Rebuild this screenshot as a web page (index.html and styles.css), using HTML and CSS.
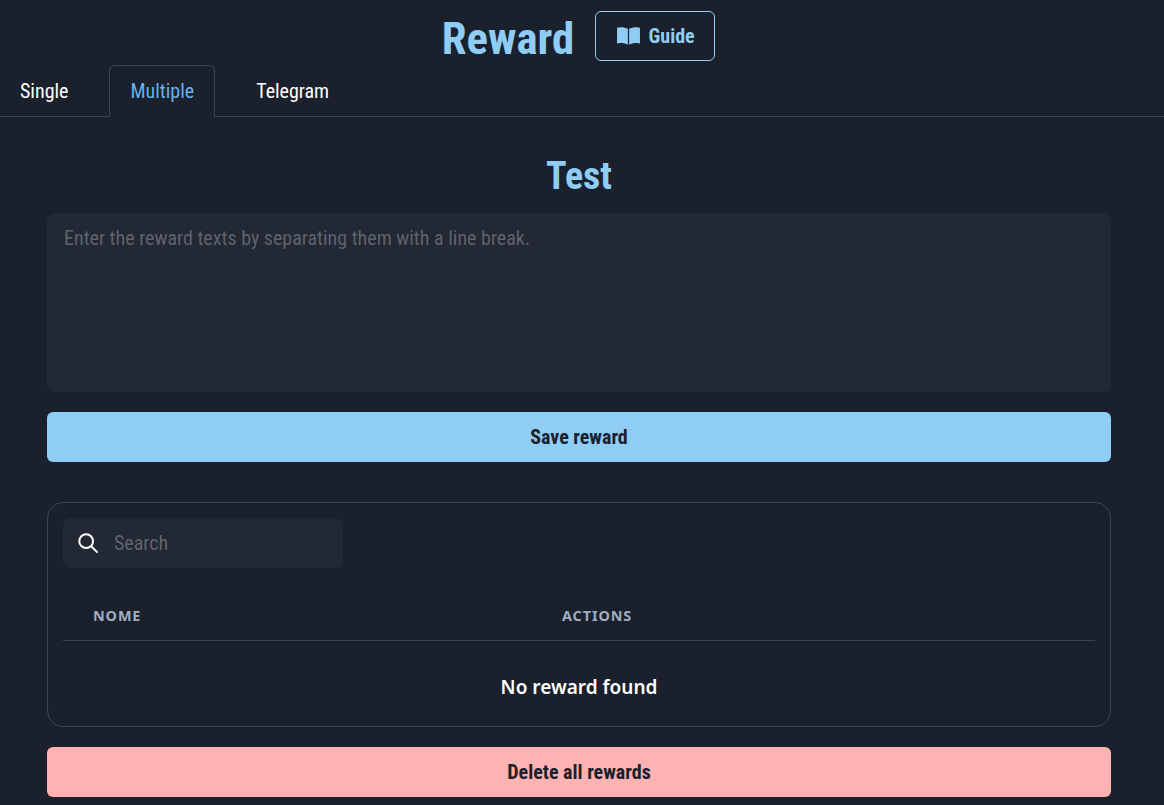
FILE: index.html
```html
<!DOCTYPE html>
<html lang="en">
<head>
  <meta charset="UTF-8">
  <title>Reward</title>
  <link rel="stylesheet" href="styles.css">
</head>
<body>
  <header class="page-header">
    <h1 class="page-title">Reward</h1>
    <button class="btn-guide">
      <svg class="guide-icon" viewBox="0 0 24 24" width="25" height="25"><path fill="currentColor" d="M11.400 5.600C9.800 4.500 7.200 4 4.600 4 3.200 4 2 4.200 1 4.500v15.200c1-.3 2.200-.5 3.600-.5 2.600 0 5.200.5 6.800 1.600zM12.600 5.600C14.200 4.500 16.800 4 19.400 4c1.400 0 2.600.2 3.600.5v15.200c-1-.3-2.200-.5-3.600-.5-2.600 0-5.200.5-6.800 1.600z"/></svg>
      <span>Guide</span>
    </button>
  </header>

  <nav class="tabs">
    <a class="tab">Single</a>
    <a class="tab tab-active">Multiple</a>
    <a class="tab">Telegram</a>
  </nav>

  <main class="content">
    <h2 class="section-title">Test</h2>
    <textarea class="reward-input" placeholder="Enter the reward texts by separating them with a line break."></textarea>
    <button class="btn btn-save">Save reward</button>

    <section class="table-card">
      <div class="search">
        <svg class="search-icon" viewBox="0 0 24 24" width="22" height="22"><circle cx="10" cy="10" r="7.500" fill="none" stroke="currentColor" stroke-width="2.200"/><path d="M15.500 15.500L22.500 22.500" stroke="currentColor" stroke-width="2.200" fill="none"/></svg>
        <input class="search-input" placeholder="Search">
      </div>
      <div class="table-head">
        <div class="col-name">NOME</div>
        <div class="col-actions">ACTIONS</div>
      </div>
      <p class="empty">No reward found</p>
    </section>

    <button class="btn btn-delete">Delete all rewards</button>
  </main>
</body>
</html>
```

FILE: styles.css
```css
* {
  box-sizing: border-box;
}
body {
  margin: 0;
  background-color: #1a202c;
  color: white;
  font-family: Roboto, sans-serif;
  font-stretch: 75%;
  overflow: hidden;
}
button, input, textarea {
  font-family: inherit;
  font-stretch: inherit;
}
.page-header {
  display: flex;
  justify-content: center;
  align-items: center;
  gap: 21px;
  height: 65px;
  padding-top: 12px;
  padding-right: 7px;
}
.page-title {
  margin: 0;
  font-size: 44.800px;
  font-weight: 700;
  color: #90cdf4;
}
.btn-guide {
  display: flex;
  align-items: center;
  justify-content: center;
  gap: 8px;
  width: 120px;
  height: 50px;
  margin-top: -6px;
  background: transparent;
  border: 1px solid #90cdf4;
  border-radius: 6px;
  color: #90cdf4;
  font-size: 20px;
  font-weight: 700;
}
.tabs {
  display: flex;
  gap: 20px;
  height: 52px;
  border-bottom: 1px solid rgba(255,255,255,0.16);
}
.tab {
  display: flex;
  align-items: center;
  justify-content: center;
  height: 52px;
  padding: 0 20px;
  font-size: 20px;
  border: 1px solid transparent;
}
.tab:first-child {
  margin-left: -1px;
}
.tab-active {
  color: #63b3ed;
  border-color: rgba(255,255,255,0.16);
  border-bottom-color: #1a202c;
  border-radius: 6px 6px 0 0;
}
.content {
  display: flex;
  flex-direction: column;
  padding: 0 53px 0 47px;
}
.section-title {
  margin: 37px 0 15px;
  text-align: center;
  font-size: 38px;
  line-height: 44px;
  font-weight: 700;
  color: #90cdf4;
}
.reward-input {
  display: block;
  height: 179px;
  padding: 13px 17px;
  background-color: rgba(255,255,255,0.04);
  border: none;
  border-radius: 8px;
  font-size: 20px;
  color: white;
  resize: none;
}
.reward-input::placeholder, .search-input::placeholder {
  color: rgba(255,255,255,0.28);
}
.btn {
  height: 50px;
  border: none;
  border-radius: 6px;
  color: #1a202c;
  font-size: 20px;
  font-weight: 700;
}
.btn-save {
  margin-top: 20px;
  background-color: #90cdf4;
}
.table-card {
  height: 225px;
  margin-top: 40px;
  padding: 15px;
  border: 1px solid rgba(255,255,255,0.16);
  border-radius: 16px;
}
.search {
  display: flex;
  align-items: center;
  width: 280px;
  height: 50px;
  padding-left: 14px;
  background-color: rgba(255,255,255,0.04);
  border-radius: 8px;
  color: white;
}
.search-input {
  width: 200px;
  margin-left: 13px;
  background: none;
  border: none;
  color: white;
  font-size: 20px;
}
.table-head {
  display: grid;
  grid-template-columns: 469px 1fr;
  margin-top: 22px;
  padding: 17px 30px 15px;
  border-bottom: 1px solid rgba(255,255,255,0.16);
  font-family: "Noto Sans", sans-serif;
  font-stretch: normal;
  font-size: 14.400px;
  line-height: 18px;
  font-weight: 700;
  letter-spacing: 0.900px;
  color: #a0aec0;
}
.empty {
  margin: 0;
  padding-top: 33px;
  text-align: center;
  font-family: "Noto Sans", sans-serif;
  font-stretch: normal;
  font-size: 19px;
  font-weight: 600;
}
.btn-delete {
  margin-top: 20px;
  background-color: #feb2b2;
}
```
